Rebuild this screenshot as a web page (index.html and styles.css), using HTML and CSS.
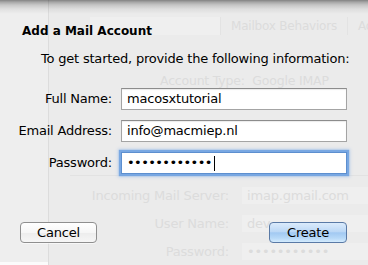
FILE: index.html
```html
<!DOCTYPE html>
<html>
<head>
<meta charset="utf-8">
<link rel="stylesheet" href="styles.css">
</head>
<body>
<div class="window">
  <div class="backdrop">
    <div class="sidebar"><div class="sidebar-foot"></div></div>
    <div class="prefs">
      <div class="tabs">
        <span class="tab tab-blank"></span>
        <span class="tab">Mailbox Behaviors</span>
        <span class="tab">Advanced</span>
      </div>
      <div class="acct-type">Account Type:&nbsp; Google IMAP</div>
      <div class="bd-sep"></div>
      <div class="bd-form">
        <span class="bd-label">Incoming Mail Server:</span><span class="bd-field">imap.gmail.com</span>
        <span class="bd-label">User Name:</span><span class="bd-field">dev</span>
        <span class="bd-label">Password:</span><span class="bd-field">•••••••••••</span>
      </div>
    </div>
  </div>
  <div class="sheet">
    <div class="title">Add a Mail Account</div>
    <div class="intro">To get started, provide the following information:</div>
    <div class="form">
      <label class="label">Full Name:</label>
      <div class="field">macosxtutorial</div>
      <label class="label">Email Address:</label>
      <div class="field">info@macmiep.nl</div>
      <label class="label">Password:</label>
      <div class="field field-focus"><span class="dots">••••••••••••</span><span class="caret"></span></div>
    </div>
    <div class="actions">
      <button class="btn btn-cancel">Cancel</button>
      <button class="btn btn-create">Create</button>
    </div>
  </div>
</div>
</body>
</html>
```

FILE: styles.css
```css
html, body {
  margin: 0;
  padding: 0;
}
body {
  width: 368px;
  height: 265px;
  overflow: hidden;
  font-family: "DejaVu Sans", "Liberation Sans", sans-serif;
  color: #000;
}
.window {
  position: relative;
  width: 368px;
  height: 265px;
  overflow: hidden;
  background: #ebebeb;
}
.backdrop {
  display: flex;
  height: 100%;
}
.sidebar {
  flex: 0 0 48px;
  background: #eeeeee;
  border-right: 1px solid #dcdcdc;
  display: flex;
  flex-direction: column;
  justify-content: flex-end;
}
.sidebar-foot {
  height: 3px;
  background: #fbfbfb;
}
.prefs {
  flex: 1 1 auto;
  min-width: 0;
  overflow: hidden;
  padding-top: 17px;
  color: #dcdcdc;
  font-size: 13px;
  letter-spacing: -0.2px;
}
.tabs {
  display: flex;
  height: 18px;
  align-items: center;
  margin-left: 41px;
  font-size: 12px;
}
.tab {
  flex: 0 0 auto;
  height: 18px;
  line-height: 18px;
  padding: 0 10px;
  border-right: 1px solid #e3e3e3;
  white-space: nowrap;
}
.tab-blank {
  width: 110px;
  background: #efefef;
}
.acct-type {
  margin: 38px 0 0 111px;
  line-height: 16px;
  font-size: 12.5px;
  white-space: nowrap;
}
.bd-sep {
  margin: 86px 0 0 21px;
  height: 1px;
  background: #e2e2e2;
}
.bd-form {
  display: grid;
  grid-template-columns: 180px 130px;
  column-gap: 13px;
  row-gap: 11px;
  margin-top: 11px;
}
.bd-label {
  text-align: right;
  line-height: 17px;
  white-space: nowrap;
}
.bd-field {
  height: 17px;
  line-height: 17px;
  padding-left: 5px;
  background: #efefef;
  white-space: nowrap;
}

.sheet {
  position: absolute;
  inset: 0;
  padding-top: 24px;
  box-sizing: border-box;
  background: linear-gradient(to bottom,
    rgba(0,0,0,0.45) 0px,
    rgba(0,0,0,0.30) 2px,
    rgba(0,0,0,0.16) 5px,
    rgba(0,0,0,0.06) 9px,
    rgba(0,0,0,0) 14px);
}
.title {
  margin-left: 22px;
  font-size: 12px;
  font-weight: bold;
  line-height: 15px;
}
.intro {
  margin: 12px 0 0 41px;
  font-size: 13px;
  line-height: 16px;
  letter-spacing: -0.2px;
}
.form {
  display: grid;
  grid-template-columns: 112px 226px;
  column-gap: 9px;
  row-gap: 10px;
  margin-top: 21px;
}
.label {
  text-align: right;
  align-self: center;
  font-size: 13px;
  line-height: 16px;
  letter-spacing: -0.2px;
  white-space: nowrap;
}
.field {
  height: 22px;
  box-sizing: border-box;
  border: 1px solid #a4a4a4;
  border-top-color: #8c8c8c;
  background: #fff;
  box-shadow: inset 0 1px 1px rgba(0,0,0,0.08);
  padding-left: 5px;
  font-size: 13px;
  line-height: 20px;
  letter-spacing: -0.2px;
  white-space: nowrap;
  display: flex;
  align-items: center;
}
.field-focus {
  border-color: #5d8fcf;
  box-shadow: 0 0 1px 2px rgba(108,160,225,0.85), 0 0 3px 3px rgba(130,175,235,0.45);
}
.dots {
  letter-spacing: -0.6px;
}
.caret {
  display: inline-block;
  width: 1px;
  height: 15px;
  margin-left: 2px;
  background: #000;
}
.actions {
  display: flex;
  justify-content: space-between;
  padding: 0 21px 0 20px;
  margin-top: 48px;
}
.btn {
  height: 21px;
  box-sizing: border-box;
  border-radius: 4px;
  font-family: "DejaVu Sans", sans-serif;
  font-size: 13px;
  letter-spacing: -0.2px;
  line-height: 19px;
  padding: 0;
  color: #000;
}
.btn-cancel {
  width: 77px;
  border: 1px solid #8f8f8f;
  background: linear-gradient(to bottom, #ffffff 0%, #f6f6f6 50%, #ececec 51%, #f6f6f6 100%);
  box-shadow: 0 1px 0 rgba(255,255,255,0.6);
}
.btn-create {
  width: 78px;
  border: 1px solid #5a7aa6;
  background: linear-gradient(to bottom, #dbebfb 0%, #bcd8f6 45%, #a2c9f2 52%, #b7d9f8 80%, #d4ebfd 100%);
}
```
